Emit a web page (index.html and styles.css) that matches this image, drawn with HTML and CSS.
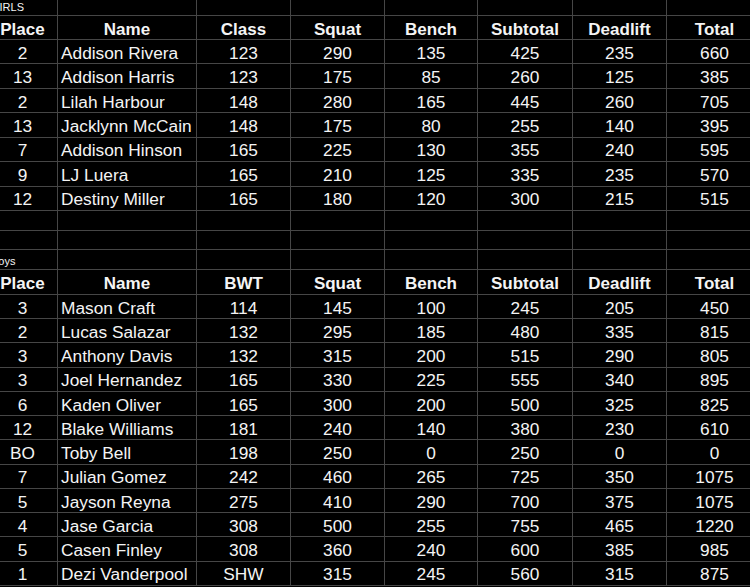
FILE: index.html
```html
<!DOCTYPE html>
<html>
<head>
<meta charset="utf-8">
<link rel="stylesheet" href="styles.css">
</head>
<body>
<div class="viewport">
  <div class="sheet">
    <div class="row section"><div class="c label">GIRLS</div><div class="c"></div><div class="c"></div><div class="c"></div><div class="c"></div><div class="c"></div><div class="c"></div><div class="c"></div></div>
    <div class="row head"><div class="c">Place</div><div class="c">Name</div><div class="c">Class</div><div class="c">Squat</div><div class="c">Bench</div><div class="c">Subtotal</div><div class="c">Deadlift</div><div class="c">Total</div></div>
    <div class="row data"><div class="c">2</div><div class="c name">Addison Rivera</div><div class="c">123</div><div class="c">290</div><div class="c">135</div><div class="c">425</div><div class="c">235</div><div class="c">660</div></div>
    <div class="row data"><div class="c">13</div><div class="c name">Addison Harris</div><div class="c">123</div><div class="c">175</div><div class="c">85</div><div class="c">260</div><div class="c">125</div><div class="c">385</div></div>
    <div class="row data"><div class="c">2</div><div class="c name">Lilah Harbour</div><div class="c">148</div><div class="c">280</div><div class="c">165</div><div class="c">445</div><div class="c">260</div><div class="c">705</div></div>
    <div class="row data"><div class="c">13</div><div class="c name">Jacklynn McCain</div><div class="c">148</div><div class="c">175</div><div class="c">80</div><div class="c">255</div><div class="c">140</div><div class="c">395</div></div>
    <div class="row data"><div class="c">7</div><div class="c name">Addison Hinson</div><div class="c">165</div><div class="c">225</div><div class="c">130</div><div class="c">355</div><div class="c">240</div><div class="c">595</div></div>
    <div class="row data"><div class="c">9</div><div class="c name">LJ Luera</div><div class="c">165</div><div class="c">210</div><div class="c">125</div><div class="c">335</div><div class="c">235</div><div class="c">570</div></div>
    <div class="row data"><div class="c">12</div><div class="c name">Destiny Miller</div><div class="c">165</div><div class="c">180</div><div class="c">120</div><div class="c">300</div><div class="c">215</div><div class="c">515</div></div>
    <div class="row blank"><div class="c"></div><div class="c"></div><div class="c"></div><div class="c"></div><div class="c"></div><div class="c"></div><div class="c"></div><div class="c"></div></div>
    <div class="row blank"><div class="c"></div><div class="c"></div><div class="c"></div><div class="c"></div><div class="c"></div><div class="c"></div><div class="c"></div><div class="c"></div></div>
    <div class="row section"><div class="c label">Boys</div><div class="c"></div><div class="c"></div><div class="c"></div><div class="c"></div><div class="c"></div><div class="c"></div><div class="c"></div></div>
    <div class="row head"><div class="c">Place</div><div class="c">Name</div><div class="c">BWT</div><div class="c">Squat</div><div class="c">Bench</div><div class="c">Subtotal</div><div class="c">Deadlift</div><div class="c">Total</div></div>
    <div class="row data"><div class="c">3</div><div class="c name">Mason Craft</div><div class="c">114</div><div class="c">145</div><div class="c">100</div><div class="c">245</div><div class="c">205</div><div class="c">450</div></div>
    <div class="row data"><div class="c">2</div><div class="c name">Lucas Salazar</div><div class="c">132</div><div class="c">295</div><div class="c">185</div><div class="c">480</div><div class="c">335</div><div class="c">815</div></div>
    <div class="row data"><div class="c">3</div><div class="c name">Anthony Davis</div><div class="c">132</div><div class="c">315</div><div class="c">200</div><div class="c">515</div><div class="c">290</div><div class="c">805</div></div>
    <div class="row data"><div class="c">3</div><div class="c name">Joel Hernandez</div><div class="c">165</div><div class="c">330</div><div class="c">225</div><div class="c">555</div><div class="c">340</div><div class="c">895</div></div>
    <div class="row data"><div class="c">6</div><div class="c name">Kaden Oliver</div><div class="c">165</div><div class="c">300</div><div class="c">200</div><div class="c">500</div><div class="c">325</div><div class="c">825</div></div>
    <div class="row data"><div class="c">12</div><div class="c name">Blake Williams</div><div class="c">181</div><div class="c">240</div><div class="c">140</div><div class="c">380</div><div class="c">230</div><div class="c">610</div></div>
    <div class="row data"><div class="c">BO</div><div class="c name">Toby Bell</div><div class="c">198</div><div class="c">250</div><div class="c">0</div><div class="c">250</div><div class="c">0</div><div class="c">0</div></div>
    <div class="row data"><div class="c">7</div><div class="c name">Julian Gomez</div><div class="c">242</div><div class="c">460</div><div class="c">265</div><div class="c">725</div><div class="c">350</div><div class="c">1075</div></div>
    <div class="row data"><div class="c">5</div><div class="c name">Jayson Reyna</div><div class="c">275</div><div class="c">410</div><div class="c">290</div><div class="c">700</div><div class="c">375</div><div class="c">1075</div></div>
    <div class="row data"><div class="c">4</div><div class="c name">Jase Garcia</div><div class="c">308</div><div class="c">500</div><div class="c">255</div><div class="c">755</div><div class="c">465</div><div class="c">1220</div></div>
    <div class="row data"><div class="c">5</div><div class="c name">Casen Finley</div><div class="c">308</div><div class="c">360</div><div class="c">240</div><div class="c">600</div><div class="c">385</div><div class="c">985</div></div>
    <div class="row data"><div class="c">1</div><div class="c name">Dezi Vanderpool</div><div class="c">SHW</div><div class="c">315</div><div class="c">245</div><div class="c">560</div><div class="c">315</div><div class="c">875</div></div>
  </div>
</div>
</body>
</html>
```

FILE: styles.css
```css
html, body {
  margin: 0;
  padding: 0;
  background: #000;
}

.viewport {
  width: 750px;
  height: 587px;
  overflow: hidden;
  background: #000;
}

.sheet {
  display: grid;
  grid-template-columns: 69px 138px 93px 93px 92px 94px 93px 95px;
  grid-template-rows: 20px 23px repeat(7, 23.43px) 19px 18px 19px 24px repeat(12, 23.25px);
  gap: 1px;
  background: #464646;
  width: max-content;
  margin-left: -12px;
  margin-top: -5px;
  padding-bottom: 1px;
  font-family: "Liberation Sans", Arial, sans-serif;
  color: #f4f4f4;
}

.row {
  display: contents;
}

.c {
  background: #000;
  display: flex;
  align-items: center;
  justify-content: center;
  font-size: 17.3px;
  white-space: nowrap;
  overflow: hidden;
}

.data .c {
  padding-top: 3px;
}

.head .c {
  font-weight: bold;
  font-size: 17px;
  padding-top: 4px;
}

.c.name {
  justify-content: flex-start;
  padding-left: 3px;
}

.section .c {
  align-items: flex-end;
  justify-content: flex-start;
}

.c.label {
  font-size: 11px;
  line-height: 12px;
  padding-left: 3px;
  padding-bottom: 2px;
  overflow: visible;
}
```
